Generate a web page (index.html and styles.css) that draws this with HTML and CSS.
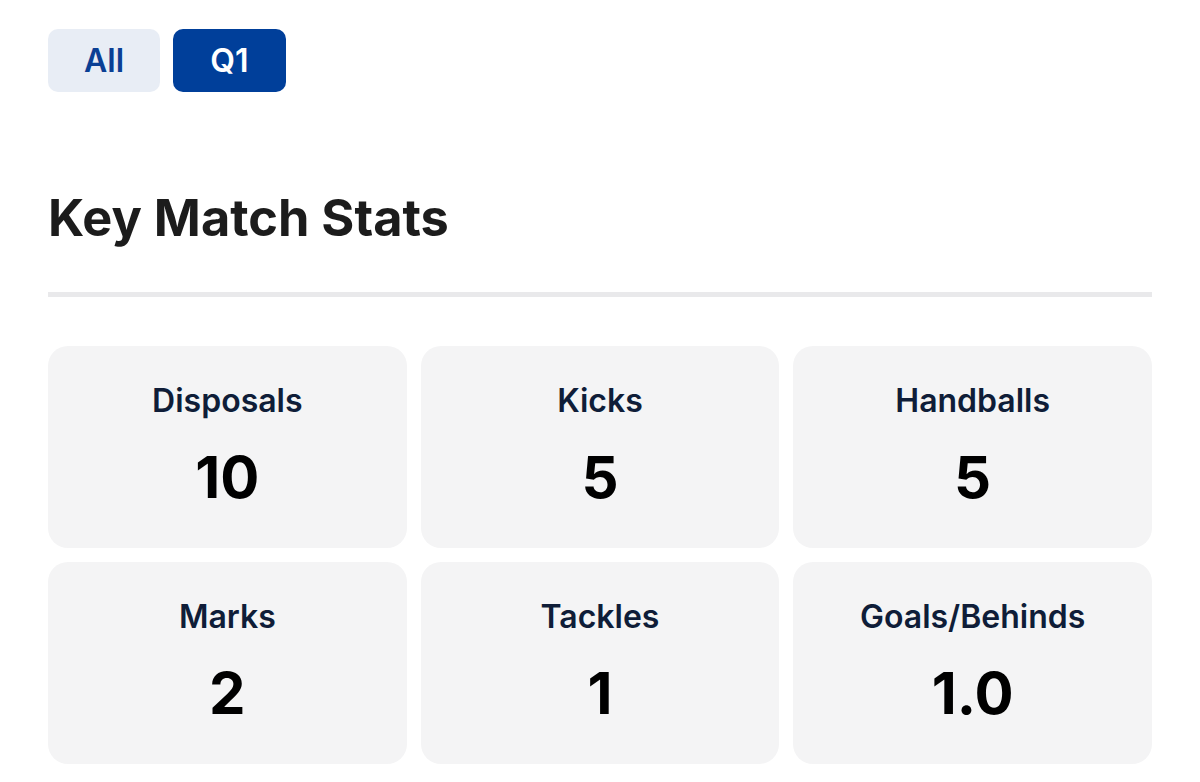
FILE: index.html
```html
<!DOCTYPE html>
<html>
<head>
<meta charset="utf-8">
<link rel="stylesheet" href="styles.css">
</head>
<body>
<div class="page">
  <div class="tabs">
    <button class="tab">All</button>
    <button class="tab active">Q1</button>
  </div>
  <h1 class="title">Key Match Stats</h1>
  <div class="divider"></div>
  <div class="grid">
    <div class="card"><div class="label">Disposals</div><div class="value">10</div></div>
    <div class="card"><div class="label">Kicks</div><div class="value">5</div></div>
    <div class="card"><div class="label">Handballs</div><div class="value">5</div></div>
    <div class="card"><div class="label">Marks</div><div class="value">2</div></div>
    <div class="card"><div class="label">Tackles</div><div class="value">1</div></div>
    <div class="card"><div class="label">Goals/Behinds</div><div class="value">1.0</div></div>
  </div>
</div>
</body>
</html>
```

FILE: styles.css
```css
html, body {
  margin: 0;
  padding: 0;
  background: #ffffff;
}
body {
  font-family: Inter, "Noto Sans", sans-serif;
}
.page {
  padding: 29px 48px 0 48px;
}
.tabs {
  display: flex;
  gap: 13px;
}
.tab {
  width: 112px;
  height: 63px;
  border: none;
  border-radius: 10px;
  font-family: Inter, sans-serif;
  font-size: 32px;
  font-weight: 600;
  background: #e8edf5;
  color: #0a3f94;
  padding: 0;
}
.tab.active {
  width: 113px;
  background: #003f9a;
  color: #ffffff;
}
.title {
  margin: 96px 0 0 0;
  font-size: 50.5px;
  line-height: 60px;
  font-weight: 700;
  color: #1c1c1c;
}
.divider {
  margin-top: 44px;
  height: 5px;
  background: #e9e9eb;
}
.grid {
  margin-top: 49px;
  display: grid;
  grid-template-columns: repeat(3, 1fr);
  gap: 14px;
}
.card {
  background: #f4f4f5;
  border-radius: 20px;
  padding: 35px 0 38px;
  text-align: center;
}
.label {
  font-size: 32px;
  line-height: 40px;
  font-weight: 600;
  color: #0f1d38;
}
.value {
  margin-top: 23px;
  font-size: 58px;
  line-height: 66px;
  font-weight: 700;
  color: #000000;
}
```
